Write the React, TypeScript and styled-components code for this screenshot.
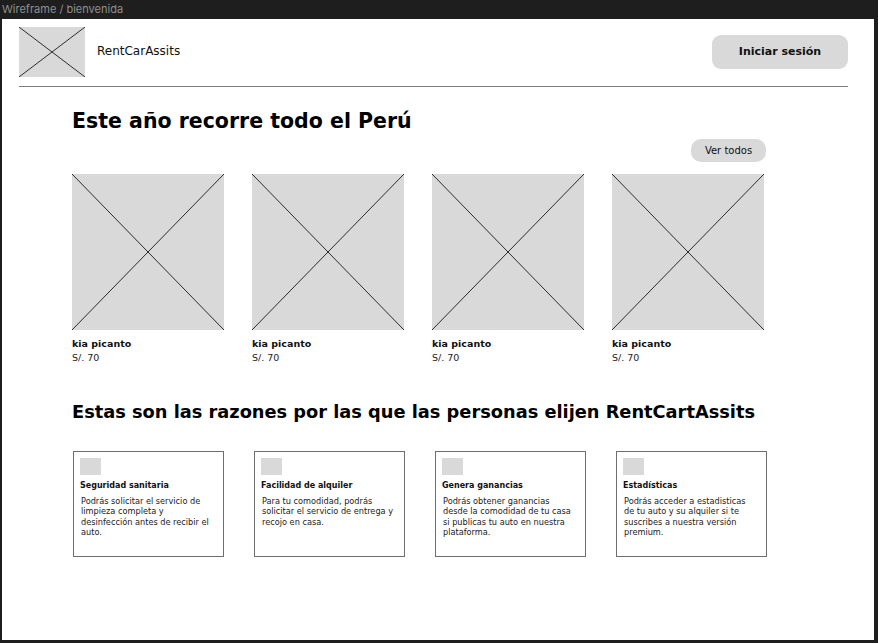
import React from 'react';
import styled, { createGlobalStyle } from 'styled-components';

const GlobalStyle = createGlobalStyle`
  html, body {
    margin: 0;
    padding: 0;
    background: #1e1e1e;
  }
  body {
    font-family: 'DejaVu Sans', 'Noto Sans', sans-serif;
    color: #000;
  }
`;

const cars = [
  { name: 'kia picanto', price: 'S/. 70' },
  { name: 'kia picanto', price: 'S/. 70' },
  { name: 'kia picanto', price: 'S/. 70' },
  { name: 'kia picanto', price: 'S/. 70' },
];

const reasons = [
  {
    title: 'Seguridad sanitaria',
    text: 'Podrás solicitar el servicio de\nlimpieza completa y\ndesinfección antes de  recibir el\nauto.',
  },
  {
    title: 'Facilidad de alquiler',
    text: 'Para tu comodidad, podrás\nsolicitar el servicio de entrega y\nrecojo en casa.',
  },
  {
    title: 'Genera ganancias',
    text: 'Podrás obtener ganancias\ndesde la comodidad de tu casa\nsi publicas tu auto  en nuestra\nplataforma.',
  },
  {
    title: 'Estadísticas',
    text: 'Podrás acceder a estadisticas\nde tu auto y su alquiler si te\nsuscribes a nuestra versión\npremium.',
  },
];

const Placeholder = ({ className }: { className?: string }) => (
  <PlaceholderBox className={className}>
    <svg width="100%" height="100%" viewBox="0 0 100 100" preserveAspectRatio="none">
      <line x1="0" y1="0" x2="100" y2="100" stroke="#2b2b2b" strokeWidth="1" vectorEffect="non-scaling-stroke" />
      <line x1="100" y1="0" x2="0" y2="100" stroke="#2b2b2b" strokeWidth="1" vectorEffect="non-scaling-stroke" />
    </svg>
  </PlaceholderBox>
);

const App = () => {
  return (
    <>
      <GlobalStyle />
      <FrameLabel>Wireframe / bienvenida</FrameLabel>
      <Frame>
        <Header>
          <Brand>
            <Logo />
            <BrandName>RentCarAssits</BrandName>
          </Brand>
          <LoginButton>Iniciar sesión</LoginButton>
        </Header>
        <Divider />
        <Main>
          <Title>Este año recorre todo el Perú</Title>
          <SeeAllRow>
            <SeeAllButton>Ver todos</SeeAllButton>
          </SeeAllRow>
          <CarGrid>
            {cars.map((car, i) => (
              <CarCard key={i}>
                <CarImage />
                <CarName>{car.name}</CarName>
                <CarPrice>{car.price}</CarPrice>
              </CarCard>
            ))}
          </CarGrid>
          <SubTitle>Estas son las razones por las que las personas elijen RentCartAssits</SubTitle>
          <ReasonGrid>
            {reasons.map((r) => (
              <ReasonCard key={r.title}>
                <ReasonIcon />
                <ReasonTitle>{r.title}</ReasonTitle>
                <ReasonText>{r.text}</ReasonText>
              </ReasonCard>
            ))}
          </ReasonGrid>
        </Main>
      </Frame>
    </>
  );
};

export default App;

const FrameLabel = styled.div`
  height: 19px;
  padding-left: 2px;
  font-family: Inter, 'Liberation Sans', sans-serif;
  font-size: 11px;
  line-height: 19px;
  color: #8f8f8f;
`;

const Frame = styled.div`
  margin: 0 4px 0 2px;
  height: 621px;
  background: #fff;
  box-sizing: border-box;
  overflow: hidden;
`;

const Header = styled.div`
  display: flex;
  align-items: center;
  justify-content: space-between;
  padding: 8px 26px 0 17px;
`;

const Brand = styled.div`
  display: flex;
  align-items: center;
  gap: 12px;
`;

const PlaceholderBox = styled.div`
  background: #d9d9d9;
  svg {
    display: block;
  }
`;

const Logo = styled(Placeholder)`
  width: 66px;
  height: 50px;
`;

const BrandName = styled.span`
  font-size: 12px;
  color: #111;
  margin-top: -2px;
`;

const LoginButton = styled.button`
  width: 136px;
  height: 34px;
  border: none;
  border-radius: 9px;
  background: #d9d9d9;
  font-family: inherit;
  font-size: 11px;
  font-weight: 600;
  color: #111;
  margin-top: -1px;
`;

const Divider = styled.div`
  height: 1px;
  margin: 9px 26px 0 17px;
  background: #7c7c7c;
`;

const Main = styled.div`
  width: 694px;
  margin-left: 70px;
`;

const Title = styled.h1`
  margin: 20px 0 0;
  font-size: 20.5px;
  font-weight: 800;
  line-height: 28px;
`;

const SeeAllRow = styled.div`
  display: flex;
  justify-content: flex-end;
  margin-top: 4px;
`;

const SeeAllButton = styled.button`
  width: 75px;
  height: 23px;
  border: none;
  border-radius: 10px;
  background: #d9d9d9;
  font-family: inherit;
  font-size: 10px;
  font-weight: 500;
  color: #111;
  padding: 0;
`;

const CarGrid = styled.div`
  display: grid;
  grid-template-columns: repeat(4, 152px);
  column-gap: 28px;
  margin-top: 12px;
`;

const CarCard = styled.div`
  display: flex;
  flex-direction: column;
`;

const CarImage = styled(Placeholder)`
  width: 152px;
  height: 156px;
`;

const CarName = styled.div`
  margin-top: 7px;
  font-size: 9.5px;
  font-weight: 700;
  line-height: 14px;
  color: #111;
`;

const CarPrice = styled.div`
  font-size: 9.5px;
  line-height: 13px;
  color: #222;
`;

const SubTitle = styled.h2`
  margin: 36px 0 0;
  font-size: 17.8px;
  font-weight: 700;
  line-height: 24px;
  white-space: nowrap;
`;

const ReasonGrid = styled.div`
  display: grid;
  grid-template-columns: repeat(4, 151px);
  column-gap: 30px;
  margin-top: 27px;
  margin-left: 1px;
`;

const ReasonCard = styled.div`
  height: 106px;
  box-sizing: border-box;
  border: 1px solid #6f6f6f;
  padding: 6px 6px 0;
`;

const ReasonIcon = styled.div`
  width: 21px;
  height: 17px;
  background: #d9d9d9;
`;

const ReasonTitle = styled.div`
  margin-top: 5px;
  font-size: 8px;
  font-weight: 700;
  line-height: 11px;
  color: #111;
`;

const ReasonText = styled.div`
  margin-top: 5px;
  padding-left: 1px;
  font-size: 8.2px;
  line-height: 10.4px;
  color: #222;
  white-space: pre-line;
`;
